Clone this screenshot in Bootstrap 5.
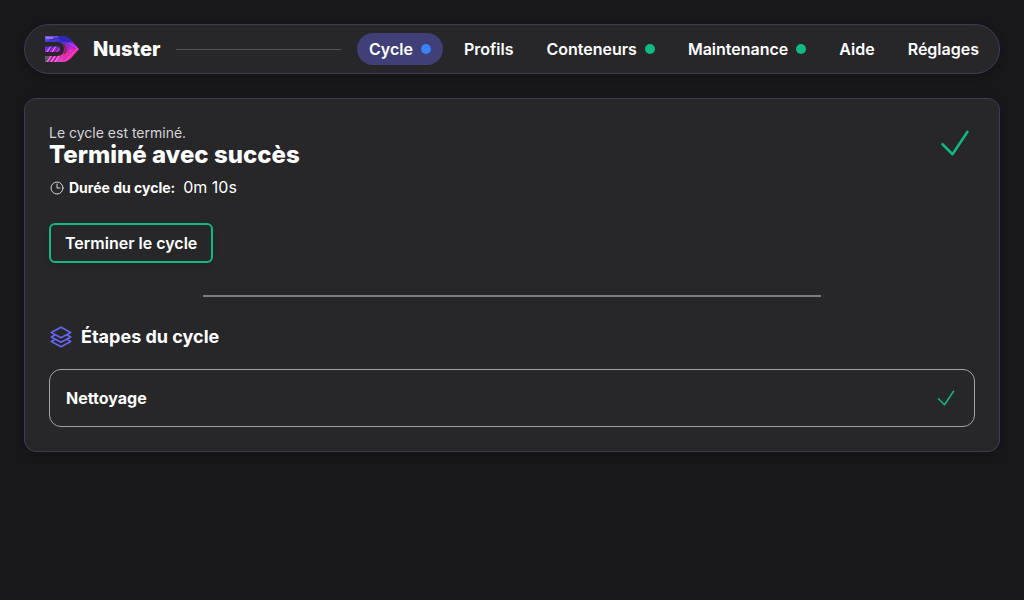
<!DOCTYPE html>
<html lang="fr">
<head>
<meta charset="utf-8">
<meta name="viewport" content="width=device-width, initial-scale=1">
<title>Nuster</title>
<link rel="stylesheet" href="https://cdn.jsdelivr.net/npm/bootstrap@5.3.0/dist/css/bootstrap.min.css">
<style>
  body { background: #18181b; color: #fff; font-family: Inter, "Liberation Sans", sans-serif; font-size: 16px; line-height: 24px; }
  .panel { background: #27272a; border: 1px solid #3c3b5a; box-shadow: 0 4px 8px rgba(0, 0, 0, .18); }
  .topbar { border-radius: 25px; padding: 8px 8px 8px 20px; margin-bottom: 24px; }
  .brand { font-size: 20px; line-height: 28px; font-weight: 800; gap: 13px; }
  .rule { height: 1px; background: #52525b; margin: 0 16px; }
  .topbar .nav { gap: 9px; }
  .topbar .nav-link { color: #fff; font-weight: 600; padding: 4px 12px; border-radius: 16px; gap: 8px; }
  .topbar .nav-link.active { background: #403f78; }
  .dot { width: 10px; height: 10px; background: #10b981; }
  .dot-run { background: #3b82f6; }
  .cycle { border-radius: 12px; padding: 24px; }
  .status { font-size: 14px; line-height: 20px; color: #d4d4d8; }
  .cycle h1 { font-size: 24px; line-height: 24px; font-weight: 800; margin: 0 0 8px; }
  .duration { gap: 4px; margin-bottom: 23px; }
  .duration strong { font-size: 14px; font-weight: 700; }
  .btn-finish { color: #fff; border: 2px solid #10b981; border-radius: 6px; font-weight: 600; padding: 6px 14px; line-height: 24px; box-shadow: 0 4px 6px rgba(0, 0, 0, .1); }
  .btn-finish:hover { color: #fff; background: #10b981; border-color: #10b981; }
  .divider { width: 66.667%; height: 2px; background: #7b7b80; border: 0; opacity: 1; margin: 32px auto 28px; }
  .cycle h2 { font-size: 18px; line-height: 24px; font-weight: 700; }
  .step { border: 1px solid #a1a1aa; border-radius: 12px; padding: 16px; font-weight: 700; }
  .tick { color: #10b981; }
</style>
</head>
<body>
<div class="container-fluid p-4">
  <header class="topbar panel d-flex align-items-center">
    <a class="brand d-flex align-items-center text-white text-decoration-none" href="#">
      <svg width="35" height="28" viewBox="0 0 35 28" aria-hidden="true">
        <defs>
          <linearGradient id="ink" x1="0.2" y1="0" x2="0.5" y2="1">
            <stop offset="0" stop-color="#7a55ea"/><stop offset=".25" stop-color="#3430d0"/>
            <stop offset=".5" stop-color="#a42be0"/><stop offset=".75" stop-color="#ee27b4"/><stop offset="1" stop-color="#c25bc0"/>
          </linearGradient>
          <clipPath id="logo"><path d="M0 1H17Q22 1 26 5L34 14L26 23Q22 27 17 27H0V21H12Q19 21 19 14Q19 7 12 7H0ZM0 11.500H12Q15 11.500 15 14Q15 17 12 17H0Z"/></clipPath>
        </defs>
        <g clip-path="url(#logo)">
          <path fill="url(#ink)" d="M0 0H35V28H0Z"/>
          <path fill="#2c28bd" d="M13 1H22L27 7L16 7Z"/>
          <path fill="#fb2aae" d="M23 15L35 14L23 27H17Z"/>
          <path fill="#665566" d="M0 21H5L2 27H0Z"/>
          <g fill="none" stroke-width="1">
            <path stroke="#e4a9ef" stroke-opacity=".8" d="M2 27L6 21M6 27L10 21M10 27L14 21M2 17L6 11M7 17L11 11M1 3H8"/>
            <path stroke="#4b1280" stroke-opacity=".7" d="M4 27L8 21M8 27L12 21M4 17L8 11M10 17L13 12M5 5L15 3"/>
            <path stroke="#f35bd0" stroke-opacity=".7" d="M23 8L33 14M16 27L28 16M20 26L32 14"/>
            <path stroke="#7a1fc8" stroke-opacity=".7" d="M22 8L31 14M18 25L29 15M23 10V18"/>
            <path stroke="#8b2448" stroke-width="2" d="M18 9Q23 14 19 19"/>
          </g>
        </g>
      </svg>
      Nuster
    </a>
    <div class="rule flex-grow-1"></div>
    <nav class="nav flex-nowrap" aria-label="Navigation principale">
      <a class="nav-link active d-flex align-items-center" aria-current="page" href="#">Cycle <span class="dot dot-run rounded-circle"></span></a>
      <a class="nav-link" href="#">Profils</a>
      <a class="nav-link d-flex align-items-center" href="#">Conteneurs <span class="dot rounded-circle"></span></a>
      <a class="nav-link d-flex align-items-center" href="#">Maintenance <span class="dot rounded-circle"></span></a>
      <a class="nav-link" href="#">Aide</a>
      <a class="nav-link" href="#">Réglages</a>
    </nav>
  </header>

  <main class="cycle panel">
    <div class="d-flex justify-content-between align-items-start">
      <div>
        <div class="status">Le cycle est terminé.</div>
        <h1>Terminé avec succès</h1>
        <div class="duration d-flex align-items-center">
          <svg width="16" height="16" viewBox="0 0 24 24" fill="none" stroke="#d4d4d8" stroke-width="1.5" stroke-linecap="round" stroke-linejoin="round" aria-hidden="true"><path d="M12 6v6h4.500m4.500 0a9 9 0 11-18 0 9 9 0 0118 0z"/></svg>
          <div class="d-flex align-items-baseline gap-2">
            <strong>Durée du cycle:</strong>
            <span>0m 10s</span>
          </div>
        </div>
        <button type="button" class="btn btn-finish">Terminer le cycle</button>
      </div>
      <svg class="tick" width="40" height="40" viewBox="0 0 24 24" fill="none" stroke="currentColor" stroke-width="1.5" stroke-linecap="round" stroke-linejoin="round" aria-hidden="true"><path d="M4.500 12.750l6 6 9-13.500"/></svg>
    </div>

    <hr class="divider">

    <div class="d-flex align-items-center gap-2 mb-3 pb-1">
      <svg width="24" height="24" viewBox="0 0 24 24" fill="none" stroke="#6366f1" stroke-width="1.5" stroke-linecap="round" stroke-linejoin="round" aria-hidden="true"><path d="M6.429 9.750L2.250 12l4.179 2.250m0-4.500l5.571 3 5.571-3m-11.142 0L2.250 7.500 12 2.250l9.750 5.250-4.179 2.250m0 0L21.750 12l-4.179 2.250m0 0l4.179 2.250L12 21.750 2.250 16.500l4.179-2.250m11.142 0l-5.571 3-5.571-3"/></svg>
      <h2 class="m-0">Étapes du cycle</h2>
    </div>
    <div class="step d-flex justify-content-between align-items-center">
      <span>Nettoyage</span>
      <svg class="tick" width="24" height="24" viewBox="0 0 24 24" fill="none" stroke="currentColor" stroke-width="1.5" stroke-linecap="round" stroke-linejoin="round" aria-hidden="true"><path d="M4.500 12.750l6 6 9-13.500"/></svg>
    </div>
  </main>
</div>
<script src="https://cdn.jsdelivr.net/npm/bootstrap@5.3.0/dist/js/bootstrap.bundle.min.js"></script>
</body>
</html>
